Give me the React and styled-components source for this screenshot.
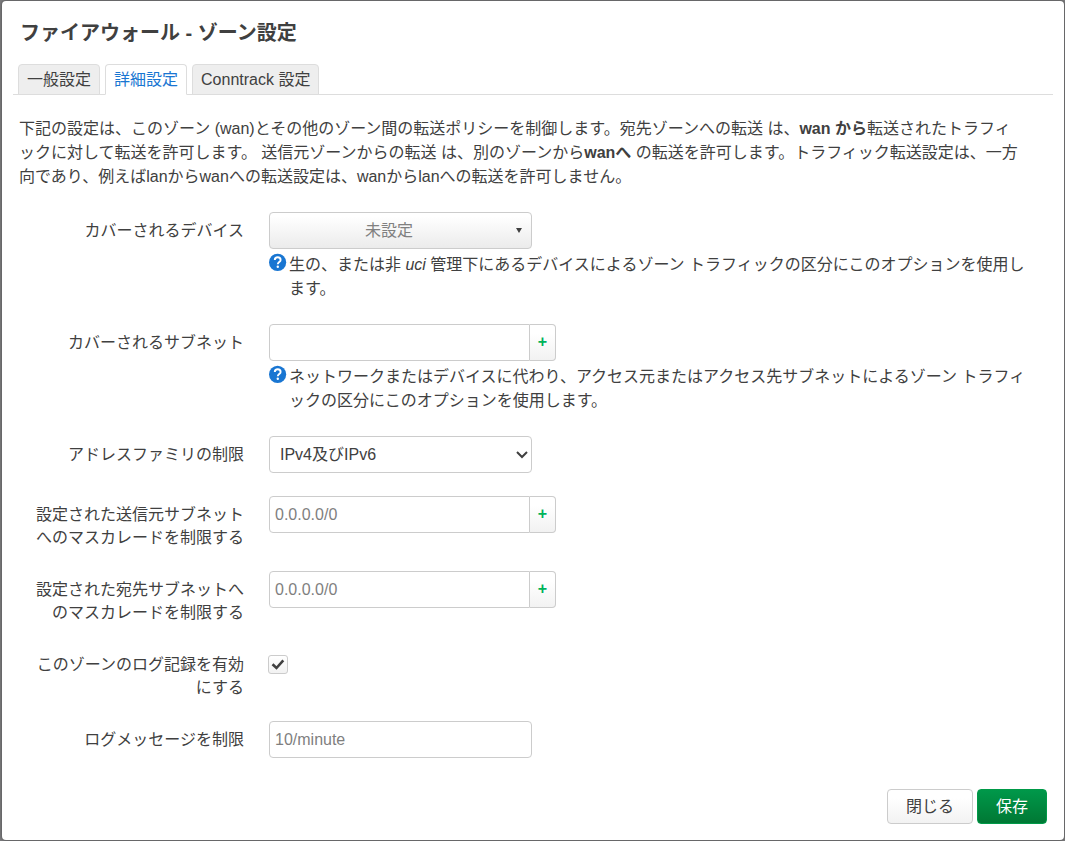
import React, { useState } from "react";
import styled, { createGlobalStyle } from "styled-components";

const GlobalStyle = createGlobalStyle`
  * {
    box-sizing: border-box;
  }

  body {
    margin: 0;
    background: #7b7b7d;
    color: #404040;
    font-family: "Liberation Sans", "Noto Sans CJK JP", sans-serif;
    font-size: 16px;
    line-height: 24px;
  }

  button,
  input,
  select {
    margin: 0;
    color: inherit;
    font: inherit;
  }
`;

const Overlay = styled.div`
  display: flex;
  min-height: 100vh;
  padding: 1px 1px 1px 2px;
`;

const Modal = styled.form`
  flex: 1;
  display: flex;
  flex-direction: column;
  padding: 17px 11px 16px;
  background: #fff;
  border-radius: 4px;
  box-shadow: 0 0 3px #444;
`;

const Title = styled.h4`
  margin: 0 0 16px;
  padding: 0 7px;
  font-size: 20px;
  line-height: 30px;
`;

const Tabs = styled.ul`
  display: flex;
  gap: 5px;
  margin: 0 0 22px;
  padding: 0 5px;
  list-style: none;
  border-bottom: 1px solid #ddd;
`;

const Tab = styled.li`
  margin-bottom: -1px;

  a {
    display: block;
    height: 31px;
    padding: 2px 8px;
    line-height: 26px;
    text-decoration: none;
    color: ${(props) => (props.$active ? "#1976d2" : "#404040")};
    background: ${(props) => (props.$active ? "#fff" : "#eee")};
    border: 1px solid #ddd;
    border-bottom-color: ${(props) => (props.$active ? "#fff" : "#ddd")};
    border-radius: 4px 4px 0 0;
  }
`;

const Description = styled.p`
  margin: 0 0 23px;
  padding: 0 30px 0 6px;
`;

const Fields = styled.div`
  display: flex;
  flex-direction: column;
  gap: 23px;
  padding: 0 7px;
`;

const Row = styled.div`
  display: grid;
  grid-template-columns: 224px 1fr;
  column-gap: 25px;
  align-items: start;
`;

const Label = styled.label`
  padding: 7px 0 0 8px;
  margin-bottom: -1px;
  line-height: 23px;
  text-align: right;
`;

const TextInput = styled.input`
  display: block;
  width: 263px;
  height: 37px;
  padding: 0 5px;
  background: #fff;
  border: 1px solid #ccc;
  border-radius: 4px;

  &::placeholder {
    color: #7f7f7f;
    opacity: 1;
  }
`;

const SelectBox = styled.div`
  display: grid;
  align-items: center;
  width: 263px;

  select,
  svg {
    grid-area: 1 / 1;
  }

  select {
    height: 37px;
    padding: 0 24px 0 10px;
    appearance: none;
    background: #fff;
    border: 1px solid #ccc;
    border-radius: 4px;
  }

  svg {
    justify-self: end;
    margin-right: 4px;
    pointer-events: none;
  }
`;

const Dropdown = styled.button`
  display: flex;
  align-items: center;
  width: 263px;
  height: 37px;
  padding: 0 9px 0 0;
  color: #808080;
  background: linear-gradient(#fff, #fff 10%, #ebebeb);
  border: 1px solid #ccc;
  border-radius: 4px;

  span {
    flex: 1;
    padding-right: 8px;
  }
`;

const ListInput = styled.div`
  display: flex;

  ${TextInput} {
    width: 261px;
    border-radius: 4px 0 0 4px;
  }
`;

const AddButton = styled.button`
  width: 26px;
  height: 37px;
  padding: 0 0 2px;
  color: #00b35a;
  font-weight: bold;
  background: linear-gradient(#fff, #fff 25%, #f2f2f2);
  border: 1px solid #ccc;
  border-left: 0;
  border-radius: 0 4px 4px 0;
`;

const Help = styled.div`
  display: flex;
  gap: 2px;
  padding: 4px 12px 0 0;

  svg {
    flex: none;
    margin-top: -1px;
  }
`;

const CheckBox = styled.span`
  display: inline-grid;
  margin: 9px 0 0 -1px;

  input,
  svg {
    grid-area: 1 / 1;
  }

  input {
    width: 20px;
    height: 19px;
    appearance: none;
    background: linear-gradient(#fff, #f2f2f2);
    border: 1px solid #ccc;
    border-radius: 3px;
  }

  svg {
    pointer-events: none;
  }

  input:not(:checked) + svg {
    visibility: hidden;
  }
`;

const Actions = styled.div`
  display: flex;
  justify-content: flex-end;
  gap: 4px;
  margin-top: 31px;
  padding: 0 6px;
`;

const Button = styled.button`
  height: 35px;
  padding: 0 18px;
  color: ${(props) => (props.$primary ? "#fff" : "#404040")};
  background: ${(props) =>
    props.$primary
      ? "linear-gradient(#00984a, #007834)"
      : "linear-gradient(#fff, #fff 25%, #f2f2f2)"};
  border: 1px solid ${(props) => (props.$primary ? "#009a48" : "#ccc")};
  border-radius: 4px;
`;

const HelpIcon = () => (
  <svg width="18" height="20" viewBox="0 0 18 20" aria-hidden="true">
    <circle cx="8.6" cy="10.3" r="8.6" fill="#1976d2" />
    <path
      d="M5.8 8.1c0-1.7 1.2-2.8 2.9-2.8s2.9 1 2.9 2.6c0 2.1-2.8 2.2-2.8 4.4"
      fill="none"
      stroke="#fff"
      strokeWidth="1.9"
    />
    <circle cx="8.8" cy="14.8" r="1.2" fill="#fff" />
  </svg>
);

const SubnetInput = ({ id, placeholder }) => (
  <ListInput>
    <TextInput id={id} type="text" placeholder={placeholder} />
    <AddButton type="button" aria-label="追加">
      +
    </AddButton>
  </ListInput>
);

const tabs = ["一般設定", "詳細設定", "Conntrack 設定"];

const App = () => {
  const [tab, setTab] = useState(1);
  const [log, setLog] = useState(true);

  const handleTab = (e, i) => {
    e.preventDefault();
    setTab(i);
  };

  return (
    <Overlay lang="ja">
      <GlobalStyle />
      <Modal onSubmit={(e) => e.preventDefault()}>
        <Title>ファイアウォール - ゾーン設定</Title>
        <Tabs>
          {tabs.map((item, i) => (
            <Tab key={i} $active={i === tab}>
              <a href="#" onClick={(e) => handleTab(e, i)}>
                {item}
              </a>
            </Tab>
          ))}
        </Tabs>
        <Description>
          下記の設定は、このゾーン (wan)とその他のゾーン間の転送ポリシーを制御します。宛先ゾーンへの転送 は、
          <strong>wan から</strong>転送されたトラフィックに対して転送を許可します。 送信元ゾーンからの転送 は、別のゾーンから
          <strong>wanへ</strong> の転送を許可します。トラフィック転送設定は、一方向であり、例えばlanからwanへの転送設定は、wanからlanへの転送を許可しません。
        </Description>
        <Fields>
          <Row>
            <Label htmlFor="device">カバーされるデバイス</Label>
            <div>
              <Dropdown id="device" type="button">
                <span>未設定</span>
                <svg width="6" height="5" viewBox="0 0 6 5" aria-hidden="true">
                  <path d="M0 0h6L3 5z" fill="#404040" />
                </svg>
              </Dropdown>
              <Help>
                <HelpIcon />
                <div>
                  生の、または非 <em>uci</em> 管理下にあるデバイスによるゾーン トラフィックの区分にこのオプションを使用します。
                </div>
              </Help>
            </div>
          </Row>
          <Row>
            <Label htmlFor="subnet">カバーされるサブネット</Label>
            <div>
              <SubnetInput id="subnet" />
              <Help>
                <HelpIcon />
                <div>
                  ネットワークまたはデバイスに代わり、アクセス元またはアクセス先サブネットによるゾーン トラフィックの区分にこのオプションを使用します。
                </div>
              </Help>
            </div>
          </Row>
          <Row>
            <Label htmlFor="family">アドレスファミリの制限</Label>
            <SelectBox>
              <select id="family" defaultValue="any">
                <option value="any">IPv4及びIPv6</option>
                <option value="ipv4">IPv4のみ</option>
                <option value="ipv6">IPv6のみ</option>
              </select>
              <svg width="12" height="8" viewBox="0 0 12 8" aria-hidden="true">
                <path d="M1 1l5 5 5-5" fill="none" stroke="#404040" strokeWidth="2" />
              </svg>
            </SelectBox>
          </Row>
          <Row>
            <Label htmlFor="masq_src">設定された送信元サブネットへのマスカレードを制限する</Label>
            <SubnetInput id="masq_src" placeholder="0.0.0.0/0" />
          </Row>
          <Row>
            <Label htmlFor="masq_dest">設定された宛先サブネットへのマスカレードを制限する</Label>
            <SubnetInput id="masq_dest" placeholder="0.0.0.0/0" />
          </Row>
          <Row>
            <Label htmlFor="log">このゾーンのログ記録を有効にする</Label>
            <div>
              <CheckBox>
                <input
                  id="log"
                  type="checkbox"
                  checked={log}
                  onChange={(e) => setLog(e.target.checked)}
                />
                <svg width="20" height="19" viewBox="0 0 20 19" aria-hidden="true">
                  <path d="M4.5 9.2l4 3.8 6.8-7.6" fill="none" stroke="#404040" strokeWidth="2.6" />
                </svg>
              </CheckBox>
            </div>
          </Row>
          <Row>
            <Label htmlFor="log_limit">ログメッセージを制限</Label>
            <TextInput id="log_limit" type="text" placeholder="10/minute" />
          </Row>
        </Fields>
        <Actions>
          <Button type="button">閉じる</Button>
          <Button type="submit" $primary>
            保存
          </Button>
        </Actions>
      </Modal>
    </Overlay>
  );
};

export default App;
